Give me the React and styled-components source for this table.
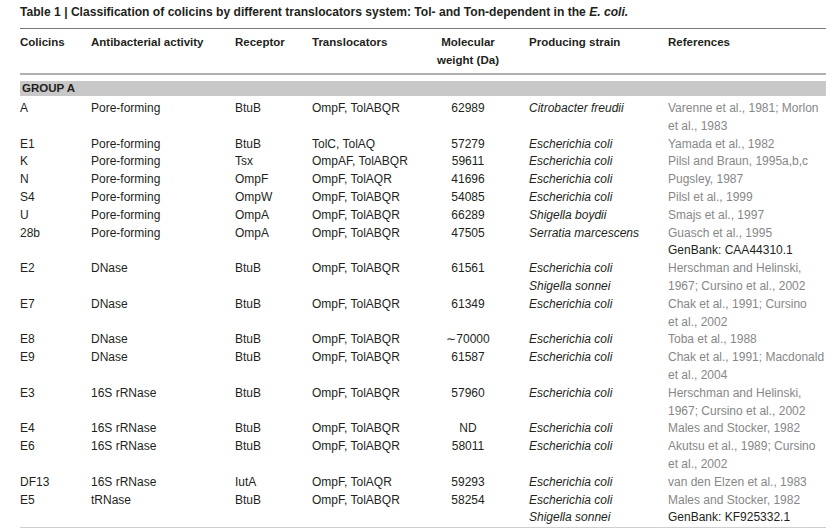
import React from 'react';
import styled, { createGlobalStyle } from 'styled-components';

const GlobalStyle = createGlobalStyle`
  html, body {
    margin: 0;
    padding: 0;
    background: #fff;
  }
  body {
    font-family: "Liberation Sans", Arial, sans-serif;
    color: #231f20;
  }
`;

const COLUMNS = '71px 144px 77px 98px 116px 142px 158px';

const Page = styled.div`
  width: 806px;
  padding: 4px 0 0 20px;
`;

const Caption = styled.div`
  font-size: 12.1px;
  font-weight: bold;
  line-height: 16px;
  height: 24px;
  border-bottom: 1px solid #7a7a7a;

  em {
    font-style: italic;
  }
`;

const HeaderRow = styled.div`
  display: grid;
  grid-template-columns: ${COLUMNS};
  padding: 4px 0 4px;
  border-bottom: 2px solid #b0b0b0;
  font-size: 11.5px;
  font-weight: bold;
  line-height: 18px;
`;

const HeadCell = styled.div`
  text-align: ${(p) => (p.$center ? 'center' : 'left')};
  padding-left: ${(p) => (p.$pad ? '3px' : '0')};
`;

const GroupBand = styled.div`
  margin-top: 6px;
  height: 15px;
  line-height: 15px;
  background: #c8c8c8;
  padding-left: 2px;
  font-size: 11.5px;
  font-weight: bold;
`;

const Body = styled.div`
  padding: 4px 0 0;
  border-bottom: 1px solid #cfcfcf;
`;

const Row = styled.div`
  display: grid;
  grid-template-columns: ${COLUMNS};
  font-size: 12px;
  line-height: 17.8px;
`;

const Cell = styled.div`
  text-align: ${(p) => (p.$center ? 'center' : 'left')};
  padding-left: ${(p) => (p.$pad ? '3px' : '0')};
  font-style: ${(p) => (p.$italic ? 'italic' : 'normal')};
  white-space: nowrap;
`;

const Line = styled.div`
  color: ${(p) => (p.$muted ? '#878787' : '#231f20')};
`;

const rows = [
  { c: 'A', a: 'Pore-forming', r: 'BtuB', t: 'OmpF, TolABQR', w: '62989', s: ['Citrobacter freudii'], ref: ['Varenne et al., 1981; Morlon', 'et al., 1983'] },
  { c: 'E1', a: 'Pore-forming', r: 'BtuB', t: 'TolC, TolAQ', w: '57279', s: ['Escherichia coli'], ref: ['Yamada et al., 1982'] },
  { c: 'K', a: 'Pore-forming', r: 'Tsx', t: 'OmpAF, TolABQR', w: '59611', s: ['Escherichia coli'], ref: ['Pilsl and Braun, 1995a,b,c'] },
  { c: 'N', a: 'Pore-forming', r: 'OmpF', t: 'OmpF, TolAQR', w: '41696', s: ['Escherichia coli'], ref: ['Pugsley, 1987'] },
  { c: 'S4', a: 'Pore-forming', r: 'OmpW', t: 'OmpF, TolABQR', w: '54085', s: ['Escherichia coli'], ref: ['Pilsl et al., 1999'] },
  { c: 'U', a: 'Pore-forming', r: 'OmpA', t: 'OmpF, TolABQR', w: '66289', s: ['Shigella boydii'], ref: ['Smajs et al., 1997'] },
  { c: '28b', a: 'Pore-forming', r: 'OmpA', t: 'OmpF, TolABQR', w: '47505', s: ['Serratia marcescens'], ref: ['Guasch et al., 1995'], gen: 'GenBank: CAA44310.1' },
  { c: 'E2', a: 'DNase', r: 'BtuB', t: 'OmpF, TolABQR', w: '61561', s: ['Escherichia coli', 'Shigella sonnei'], ref: ['Herschman and Helinski,', '1967; Cursino et al., 2002'] },
  { c: 'E7', a: 'DNase', r: 'BtuB', t: 'OmpF, TolABQR', w: '61349', s: ['Escherichia coli'], ref: ['Chak et al., 1991; Cursino', 'et al., 2002'] },
  { c: 'E8', a: 'DNase', r: 'BtuB', t: 'OmpF, TolABQR', w: '\u223C70000', s: ['Escherichia coli'], ref: ['Toba et al., 1988'] },
  { c: 'E9', a: 'DNase', r: 'BtuB', t: 'OmpF, TolABQR', w: '61587', s: ['Escherichia coli'], ref: ['Chak et al., 1991; Macdonald', 'et al., 2004'] },
  { c: 'E3', a: '16S rRNase', r: 'BtuB', t: 'OmpF, TolABQR', w: '57960', s: ['Escherichia coli'], ref: ['Herschman and Helinski,', '1967; Cursino et al., 2002'] },
  { c: 'E4', a: '16S rRNase', r: 'BtuB', t: 'OmpF, TolABQR', w: 'ND', s: ['Escherichia coli'], ref: ['Males and Stocker, 1982'] },
  { c: 'E6', a: '16S rRNase', r: 'BtuB', t: 'OmpF, TolABQR', w: '58011', s: ['Escherichia coli'], ref: ['Akutsu et al., 1989; Cursino', 'et al., 2002'] },
  { c: 'DF13', a: '16S rRNase', r: 'IutA', t: 'OmpF, TolAQR', w: '59293', s: ['Escherichia coli'], ref: ['van den Elzen et al., 1983'] },
  { c: 'E5', a: 'tRNase', r: 'BtuB', t: 'OmpF, TolABQR', w: '58254', s: ['Escherichia coli', 'Shigella sonnei'], ref: ['Males and Stocker, 1982'], gen: 'GenBank: KF925332.1' },
];

export default function App() {
  return (
    <>
      <GlobalStyle />
      <Page>
        <Caption>
          Table 1 | Classification of colicins by different translocators system: Tol- and Ton-dependent in the <em>E. coli.</em>
        </Caption>
        <HeaderRow>
          <HeadCell>Colicins</HeadCell>
          <HeadCell>Antibacterial activity</HeadCell>
          <HeadCell>Receptor</HeadCell>
          <HeadCell>Translocators</HeadCell>
          <HeadCell $center>Molecular<br />weight (Da)</HeadCell>
          <HeadCell $pad>Producing strain</HeadCell>
          <HeadCell>References</HeadCell>
        </HeaderRow>
        <GroupBand>GROUP A</GroupBand>
        <Body>
          {rows.map((row) => (
            <Row key={row.c}>
              <Cell>{row.c}</Cell>
              <Cell>{row.a}</Cell>
              <Cell>{row.r}</Cell>
              <Cell>{row.t}</Cell>
              <Cell $center>{row.w}</Cell>
              <Cell $pad $italic>
                {row.s.map((s) => <Line key={s}>{s}</Line>)}
              </Cell>
              <Cell>
                {row.ref.map((r) => <Line key={r} $muted>{r}</Line>)}
                {row.gen && <Line>{row.gen}</Line>}
              </Cell>
            </Row>
          ))}
        </Body>
      </Page>
    </>
  );
}
